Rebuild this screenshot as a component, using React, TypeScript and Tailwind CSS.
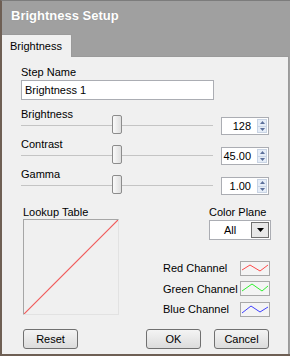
import React from "react";

const font = { fontFamily: '"Liberation Sans", Arial, sans-serif' };

function SpinBox({ value }: { value: string }) {
    return (
        <div className="flex w-[48px] h-[18px] mt-[2px] bg-white border border-[#abadb3]">
            <span className="flex-1 text-right pr-[6px] leading-[16px]">{value}</span>
            <div className="flex flex-col w-[10px] my-[1px] mr-[1px] border border-[#c9d4e4] bg-[#e6edf7]">
                <div className="flex-1 flex items-center justify-center border-b border-[#c9d4e4]">
                    <svg width="5" height="3" viewBox="0 0 5 3"><polygon points="0,3 2.5,0 5,3" fill="#5b6f9a" /></svg>
                </div>
                <div className="flex-1 flex items-center justify-center">
                    <svg width="5" height="3" viewBox="0 0 5 3"><polygon points="0,0 2.5,3 5,0" fill="#5b6f9a" /></svg>
                </div>
            </div>
        </div>
    );
}

function SliderRow({ label, value }: { label: string; value: string }) {
    return (
        <div className="flex flex-col mb-[2px]">
            <span className="h-[13px] leading-[13px]">{label}</span>
            <div className="flex items-start -mt-[6px] h-[21px] gap-[8px]">
                <div className="relative flex-1 h-full">
                    {/* track */}
                    <div className="absolute left-0 right-0 top-[10px] h-[2px] border-t border-[#c4c4c4] border-b-white" />
                    {/* thumb */}
                    <div className="absolute left-[91px] top-0 w-[10px] h-[19px] rounded-[2px] border border-[#8c8c8c] bg-gradient-to-r from-[#fafafa] to-[#dedede]" />
                </div>
                <SpinBox value={value} />
            </div>
        </div>
    );
}

function Swatch({ color, points }: { color: string; points: string }) {
    return (
        <div className="w-[30px] h-[15px] border border-[#a8a8a8] bg-[#f4f4f4]">
            <svg width="28" height="13" viewBox="0 0 28 13">
                <polyline points={points} fill="none" stroke={color} strokeWidth="1" />
            </svg>
        </div>
    );
}

function Button({ label }: { label: string }) {
    return (
        <button className="w-[55px] h-[20px] rounded-[3px] border border-[#707070] bg-gradient-to-b from-[#f4f4f4] to-[#dcdcdc] text-[11px] text-black leading-[18px]">
            {label}
        </button>
    );
}

export default function App() {
    return (
        <div
            className="w-[290px] h-[356px] flex flex-col bg-[#a0a0a0] border-l-2 border-b-2 border-[#6e5f54] border-t border-t-[#7c7c7c] text-[11px] text-black overflow-hidden"
            style={font}
        >
            {/* title */}
            <div className="h-[33px] pl-[9px] pt-[7px] text-[13px] font-bold text-white leading-[16px] [text-shadow:0_0_1px_#8a8a8a]">
                Brightness Setup
            </div>

            {/* tab strip */}
            <div className="flex h-[23px]">
                <div className="w-[70px] h-[23px] bg-[#f0f0f0] border-t border-r border-[#9a9a9a] rounded-tr-[2px] pl-[8px] pt-[5px] leading-[13px] relative z-10">
                    Brightness
                </div>
            </div>

            {/* panel */}
            <div className="flex-1 flex flex-col mr-[1px] bg-[#f0f0f0] border-t border-r border-[#9a9a9a] -mt-[1px] px-[19px] pt-[9px]">
                <span className="h-[13px] leading-[13px]">Step Name</span>
                <div className="w-[193px] h-[20px] mt-[1px] bg-white border border-[#abadb3] pl-[3px] leading-[18px]">
                    Brightness 1
                </div>

                <div className="flex flex-col mt-[8px]">
                    <SliderRow label="Brightness" value="128" />
                    <SliderRow label="Contrast" value="45.00" />
                    <SliderRow label="Gamma" value="1.00" />
                </div>

                <div className="flex mt-[8px]">
                    <div className="flex flex-col ml-[2px]">
                        <span className="h-[13px] leading-[13px]">Lookup Table</span>
                        <div className="w-[96px] h-[96px] border border-[#a6a6a6] border-r-[#e2e2e2] border-b-[#e2e2e2]">
                            <svg width="94" height="94" viewBox="0 0 94 94">
                                <line x1="0" y1="94" x2="94" y2="0" stroke="#f05a5a" strokeWidth="1.2" />
                            </svg>
                        </div>
                    </div>

                    <div className="flex-1 flex flex-col items-end">
                        <div className="flex flex-col w-[62px] -mr-[2px]">
                            <span className="h-[13px] leading-[13px]">Color Plane</span>
                            <div className="flex h-[20px] mt-[1px] bg-white border border-[#abadb3]">
                                <span className="flex-1 text-center leading-[18px]">All</span>
                                <div className="w-[18px] m-[1px] bg-[#e8e8e8] border border-[#707070] flex items-center justify-center">
                                    <svg width="7" height="4" viewBox="0 0 7 4"><polygon points="0,0 7,0 3.5,4" fill="#000" /></svg>
                                </div>
                            </div>
                        </div>

                        <div className="grid grid-cols-[77px_30px] gap-y-[4px] mt-[20px] -mr-[1px] items-center">
                            <span>Red Channel</span>
                            <Swatch color="#ff4a4a" points="1,8 9,3 19,9 27,3" />
                            <span>Green Channel</span>
                            <Swatch color="#30f030" points="1,9 11,2 21,9 27,4" />
                            <span>Blue Channel</span>
                            <Swatch color="#4040ff" points="1,10 10,3 19,9 27,4" />
                        </div>
                    </div>
                </div>

                <div className="flex mt-[11px] ml-[2px]">
                    <Button label="Reset" />
                    <div className="flex-1" />
                    <Button label="OK" />
                    <div className="w-[13px]" />
                    <Button label="Cancel" />
                </div>
            </div>
        </div>
    );
}
